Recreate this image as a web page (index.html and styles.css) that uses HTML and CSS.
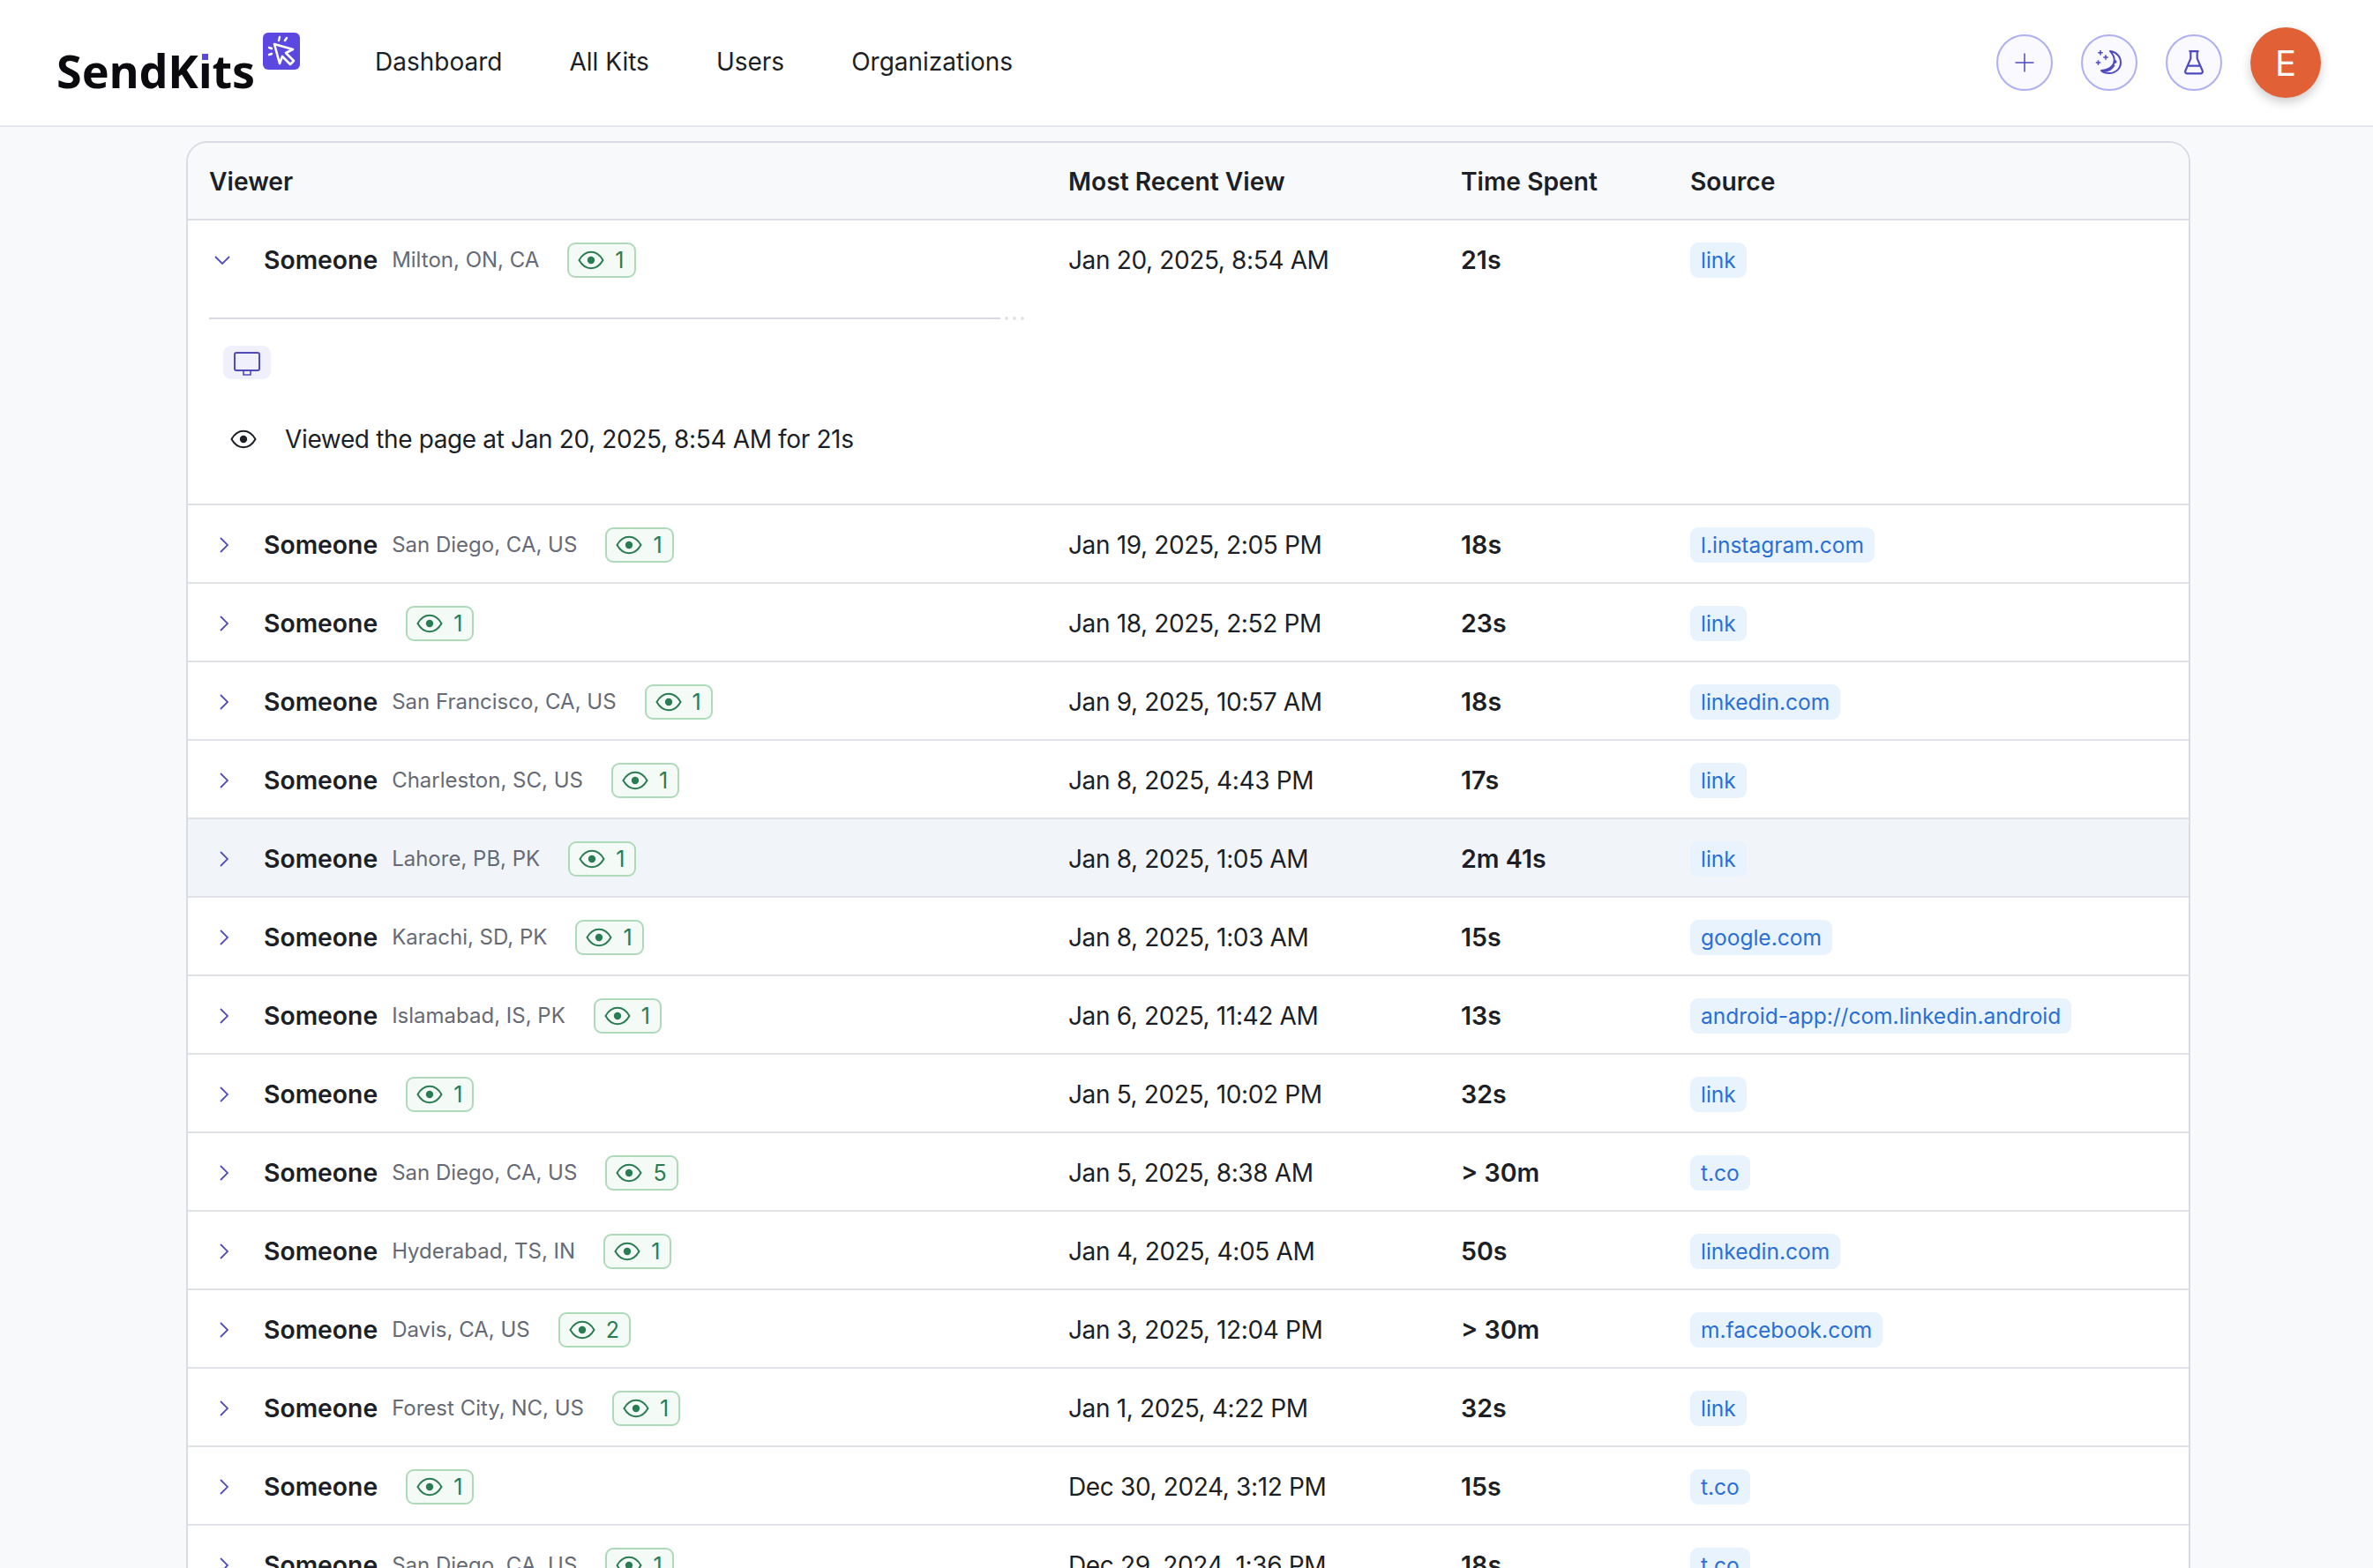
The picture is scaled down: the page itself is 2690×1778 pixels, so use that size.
FILE: index.html
```html
<!DOCTYPE html>
<html lang="en">
<head>
<meta charset="utf-8">
<title>SendKits</title>
<link rel="stylesheet" href="styles.css">
</head>
<body>
<svg class="defs" width="0" height="0" aria-hidden="true">
  <symbol id="eye" viewBox="0 0 30 22"><path d="M1.5 11C5 4.8 9.6 1.8 15 1.8S25 4.8 28.500 11C25 17.200 20.400 20.200 15 20.200S5 17.200 1.500 11Z" fill="none" stroke="currentColor" stroke-width="2"/><circle cx="15" cy="11" r="4.200" fill="currentColor"/></symbol>
  <symbol id="right" viewBox="0 0 10 18"><path d="M1 1l8 8-8 8" fill="none" stroke="currentColor" stroke-width="1.800"/></symbol>
</svg>
<header class="topbar">
  <div class="logo">
    <span class="wordmark">SendK<span class="dotted">i</span>ts</span>
    <svg class="logo-mark" viewBox="0 0 42 42"><rect width="42" height="42" rx="6" fill="#5b48e0"/><path d="M13 13l21 6-8 4 9 9-4 4-9-9-3 8z" fill="none" stroke="#fff" stroke-width="2.600" stroke-linejoin="round"/><path d="M18 9l1-4M25 9l2-3M10 18l-3-1M10 24l-3 1" stroke="#fff" stroke-width="2.400" stroke-linecap="round"/></svg>
  </div>
  <nav class="nav">
    <a>Dashboard</a><a>All Kits</a><a>Users</a><a>Organizations</a>
  </nav>
  <div class="actions">
    <button class="round"><svg viewBox="0 0 24 24" width="24" height="24"><path d="M12 1.500v21M1.500 12h21" stroke="currentColor" stroke-width="1.500" fill="none"/></svg></button>
    <button class="round"><svg viewBox="0 0 30 30" width="30" height="30"><path d="M16 2C23 3 28 8 28 15C28 22 22 27 15 27C11 27 8 26 6 24C13 24 19 20 20.500 15C21.500 10 20 6 16 2Z" fill="none" stroke="currentColor" stroke-width="2" stroke-linejoin="round"/><path d="M8 24.500c5 .2 10-2 12.500-7" fill="none" stroke="currentColor" stroke-width="2.500"/><circle cx="21.500" cy="14" r="2" fill="currentColor"/><path d="M5 1v5.500M2.250 3.750h5.500M11 6.250v5.500M8.250 9h5.500M2.500 12.250v5.500M-.25 15h5.500" stroke="currentColor" stroke-width="1.500"/></svg></button>
    <button class="round"><svg viewBox="0 0 26 32" width="24" height="30"><path d="M7 2h12M9 2v9L2.500 26a2.500 2.500 0 0 0 2.300 3.500h16.400a2.500 2.500 0 0 0 2.300-3.500L17 11V2M5.500 20h15" fill="none" stroke="currentColor" stroke-width="2.400" stroke-linejoin="round"/></svg></button>
    <div class="avatar">E</div>
  </div>
</header>
<main class="page">
  <section class="card">
    <div class="row head"><div>Viewer</div><div>Most Recent View</div><div>Time Spent</div><div>Source</div></div>

    <div class="expanded">
      <div class="row summary">
        <div class="viewer"><svg class="chev down" viewBox="0 0 18 10"><path d="M1 1l8 8 8-8" fill="none" stroke="currentColor" stroke-width="1.800"/></svg><b>Someone</b><span class="loc">Milton, ON, CA</span><span class="badge"><svg class="eye"><use href="#eye"/></svg>1</span></div>
        <div>Jan 20, 2025, 8:54 AM</div><b>21s</b><div><span class="chip">link</span></div>
      </div>
      <div class="detail">
        <div class="rule"><i></i><u></u><u></u><u></u></div>
        <div class="device"><svg viewBox="0 0 30 28" width="30" height="28"><rect x="1" y="1" width="28" height="20" rx="2" fill="none" stroke="currentColor" stroke-width="2"/><path d="M11 21v5h8v-5" fill="none" stroke="currentColor" stroke-width="1.600"/></svg></div>
        <div class="event"><svg class="eye"><use href="#eye"/></svg>Viewed the page at Jan 20, 2025, 8:54 AM for 21s</div>
      </div>
    </div>

    <div class="row"><div class="viewer"><svg class="chev"><use href="#right"/></svg><b>Someone</b><span class="loc">San Diego, CA, US</span><span class="badge"><svg class="eye"><use href="#eye"/></svg>1</span></div><div>Jan 19, 2025, 2:05 PM</div><b>18s</b><div><span class="chip">l.instagram.com</span></div></div>
    <div class="row"><div class="viewer"><svg class="chev"><use href="#right"/></svg><b>Someone</b><span class="badge"><svg class="eye"><use href="#eye"/></svg>1</span></div><div>Jan 18, 2025, 2:52 PM</div><b>23s</b><div><span class="chip">link</span></div></div>
    <div class="row"><div class="viewer"><svg class="chev"><use href="#right"/></svg><b>Someone</b><span class="loc">San Francisco, CA, US</span><span class="badge"><svg class="eye"><use href="#eye"/></svg>1</span></div><div>Jan 9, 2025, 10:57 AM</div><b>18s</b><div><span class="chip">linkedin.com</span></div></div>
    <div class="row"><div class="viewer"><svg class="chev"><use href="#right"/></svg><b>Someone</b><span class="loc">Charleston, SC, US</span><span class="badge"><svg class="eye"><use href="#eye"/></svg>1</span></div><div>Jan 8, 2025, 4:43 PM</div><b>17s</b><div><span class="chip">link</span></div></div>
    <div class="row hover"><div class="viewer"><svg class="chev"><use href="#right"/></svg><b>Someone</b><span class="loc">Lahore, PB, PK</span><span class="badge"><svg class="eye"><use href="#eye"/></svg>1</span></div><div>Jan 8, 2025, 1:05 AM</div><b>2m 41s</b><div><span class="chip">link</span></div></div>
    <div class="row"><div class="viewer"><svg class="chev"><use href="#right"/></svg><b>Someone</b><span class="loc">Karachi, SD, PK</span><span class="badge"><svg class="eye"><use href="#eye"/></svg>1</span></div><div>Jan 8, 2025, 1:03 AM</div><b>15s</b><div><span class="chip">google.com</span></div></div>
    <div class="row"><div class="viewer"><svg class="chev"><use href="#right"/></svg><b>Someone</b><span class="loc">Islamabad, IS, PK</span><span class="badge"><svg class="eye"><use href="#eye"/></svg>1</span></div><div>Jan 6, 2025, 11:42 AM</div><b>13s</b><div><span class="chip">android-app://com.linkedin.android</span></div></div>
    <div class="row"><div class="viewer"><svg class="chev"><use href="#right"/></svg><b>Someone</b><span class="badge"><svg class="eye"><use href="#eye"/></svg>1</span></div><div>Jan 5, 2025, 10:02 PM</div><b>32s</b><div><span class="chip">link</span></div></div>
    <div class="row"><div class="viewer"><svg class="chev"><use href="#right"/></svg><b>Someone</b><span class="loc">San Diego, CA, US</span><span class="badge"><svg class="eye"><use href="#eye"/></svg>5</span></div><div>Jan 5, 2025, 8:38 AM</div><b>&gt; 30m</b><div><span class="chip">t.co</span></div></div>
    <div class="row"><div class="viewer"><svg class="chev"><use href="#right"/></svg><b>Someone</b><span class="loc">Hyderabad, TS, IN</span><span class="badge"><svg class="eye"><use href="#eye"/></svg>1</span></div><div>Jan 4, 2025, 4:05 AM</div><b>50s</b><div><span class="chip">linkedin.com</span></div></div>
    <div class="row"><div class="viewer"><svg class="chev"><use href="#right"/></svg><b>Someone</b><span class="loc">Davis, CA, US</span><span class="badge"><svg class="eye"><use href="#eye"/></svg>2</span></div><div>Jan 3, 2025, 12:04 PM</div><b>&gt; 30m</b><div><span class="chip">m.facebook.com</span></div></div>
    <div class="row"><div class="viewer"><svg class="chev"><use href="#right"/></svg><b>Someone</b><span class="loc">Forest City, NC, US</span><span class="badge"><svg class="eye"><use href="#eye"/></svg>1</span></div><div>Jan 1, 2025, 4:22 PM</div><b>32s</b><div><span class="chip">link</span></div></div>
    <div class="row"><div class="viewer"><svg class="chev"><use href="#right"/></svg><b>Someone</b><span class="badge"><svg class="eye"><use href="#eye"/></svg>1</span></div><div>Dec 30, 2024, 3:12 PM</div><b>15s</b><div><span class="chip">t.co</span></div></div>
    <div class="row"><div class="viewer"><svg class="chev"><use href="#right"/></svg><b>Someone</b><span class="loc">San Diego, CA, US</span><span class="badge"><svg class="eye"><use href="#eye"/></svg>1</span></div><div>Dec 29, 2024, 1:36 PM</div><b>18s</b><div><span class="chip">t.co</span></div></div>
  </section>
</main>
</body>
</html>
```
FILE: styles.css
```css
* { box-sizing: border-box; }
html, body { margin: 0; height: 100%; overflow: hidden; }
body { background: #f8f9fb; color: #1c1f26; font-family: Inter, "Liberation Sans", sans-serif; font-size: 28px; }
.defs { position: absolute; }
b { font-weight: 600; }

.topbar { height: 144px; background: #fff; border-bottom: 2px solid #e3e6eb; display: flex; align-items: center; padding: 0 59px 0 64px; }
.logo { display: flex; width: 361px; align-items: flex-start; height: 100%; }
.wordmark { font-family: "Noto Sans", sans-serif; font-weight: 700; font-size: 52px; line-height: 60px; margin-top: 50px; color: #0b0b0f; }
.dotted { position: relative; }
.dotted::after { content: ""; position: absolute; left: 2px; top: 13px; width: 11px; height: 13px; background: #fff; }
.dotted::before { content: ""; position: absolute; z-index: 1; left: 4px; top: 17px; width: 7px; height: 7px; background: #5b48e0; }
.logo-mark { width: 42px; height: 42px; margin: 37px 0 0 9px; }
.nav { display: flex; gap: 76px; padding-bottom: 2px; }
.nav a { color: #1c1f26; }
.actions { margin-left: auto; display: flex; align-items: center; gap: 32px; }
.round { width: 64px; height: 64px; border-radius: 50%; border: 2px solid #aeb0f2; background: #f9f9ff; color: #4f4ac0; display: flex; align-items: center; justify-content: center; padding: 0; }
.round svg { overflow: visible; }
.avatar { width: 80px; height: 80px; border-radius: 50%; background: #e26035; color: #fff; font-size: 40px; display: flex; align-items: center; justify-content: center; box-shadow: 0 5px 12px rgba(0,0,0,.2); }

.page { padding: 16px 207px 0 211px; }
.card { background: #fff; border: 2px solid #d9dce4; border-radius: 24px; overflow: hidden; }

.row { display: grid; grid-template-columns: 974px 445px 260px 1fr; align-items: center; height: 89px; padding: 2px 0 0 24px; border-bottom: 2px solid #e0e1e7; }
.row > div:nth-child(2) { letter-spacing: -.36px; }
.row > b { font-size: 28.6px; }
.row.head { height: 88px; background: #f8f9fb; font-weight: 600; font-size: 28.2px; border-bottom-color: #dcdde4; }
.row.head > div:nth-child(2) { letter-spacing: 0; }
.row.hover { background: #f1f5f9; }
.viewer { display: flex; align-items: center; }
.viewer b { font-size: 28.3px; }
.chev { width: 10px; height: 18px; margin: 0 40px 0 12px; color: #4f4ac0; flex: none; }
.chev.down { width: 18px; height: 10px; margin: 0 38px 0 6px; }
.loc { font-size: 24px; color: #666a75; margin-left: 16px; }
.badge { display: inline-flex; align-items: center; gap: 12px; height: 40px; padding: 0 11px 0 10px; margin-left: 32px; border: 2px solid #afdab9; border-radius: 9px; background: #f4faf6; color: #2a7d52; font-size: 25px; }
.eye { width: 30px; height: 22px; flex: none; }
.chip { display: inline-block; height: 40px; line-height: 41px; padding: 0 12px; border-radius: 9px; background: #e8f3fd; color: #2a6fd8; font-size: 24.5px; }

.expanded { height: 323px; border-bottom: 2px solid #e0e1e7; }
.summary { border-bottom: 0; padding-top: 0; }
.detail { padding-left: 24px; }
.rule { display: flex; align-items: center; gap: 5px; height: 2px; margin-top: 21px; }
.rule i { width: 897px; height: 2px; background: #d9d9e3; }
.rule u { width: 4px; height: 4px; border-radius: 50%; background: #e2e2e8; }
.device { width: 54px; height: 38px; margin: 30px 0 0 16px; border-radius: 9px; background: #f0f0fd; color: #4f4ac0; display: flex; align-items: center; justify-content: center; padding-top: 4px; }
.event { display: flex; align-items: center; gap: 32px; margin: 48px 0 0 24px; height: 40px; letter-spacing: -.36px; }
```
